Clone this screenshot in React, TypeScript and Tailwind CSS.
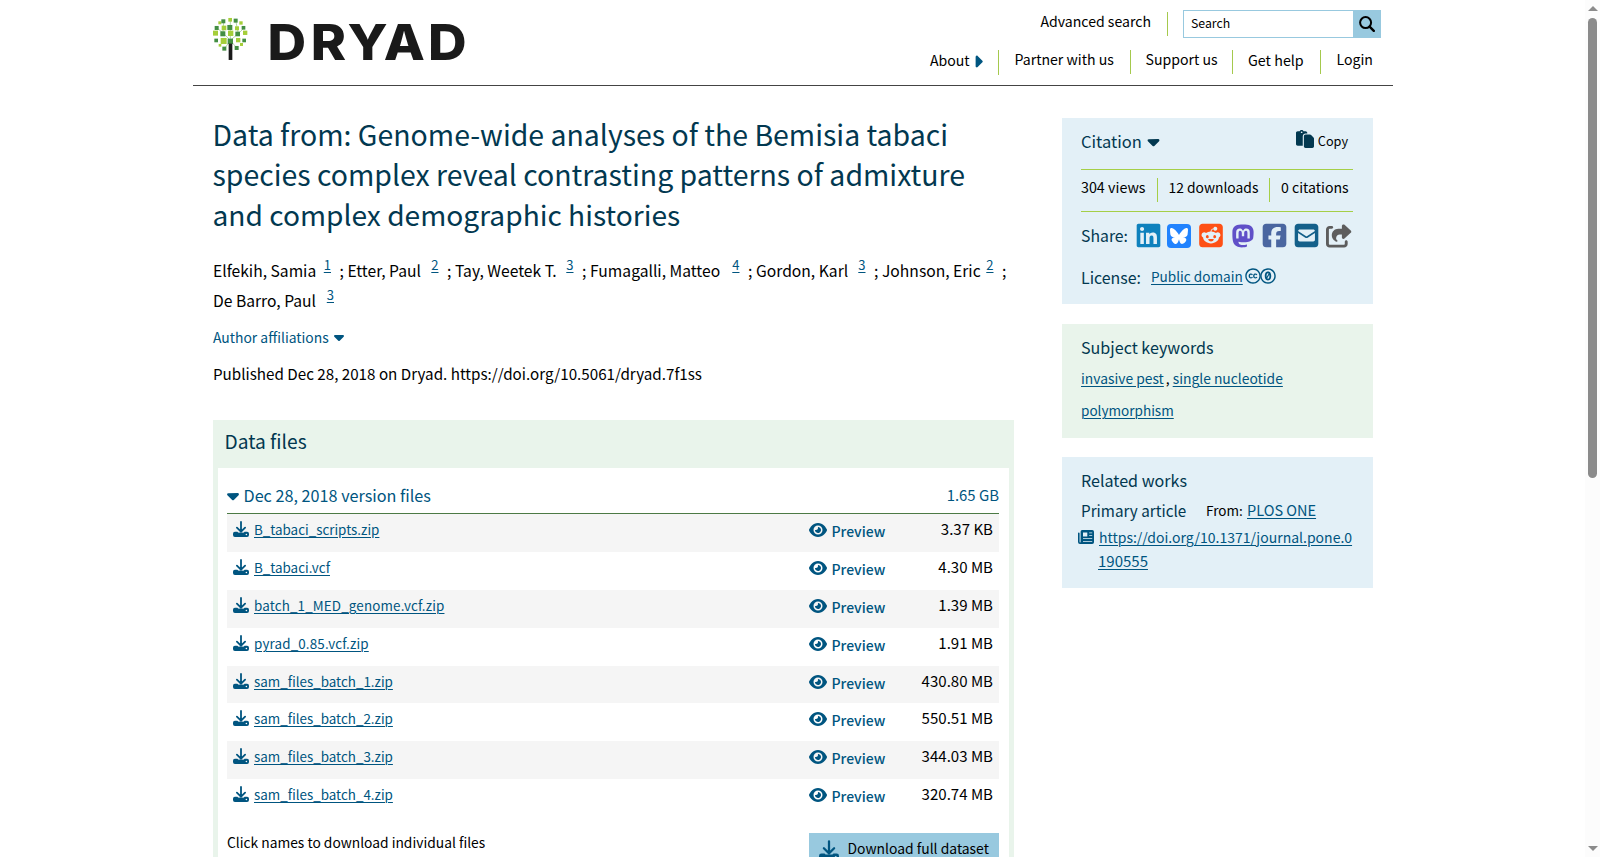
import {
  FaBluesky,
  FaCaretDown,
  FaCaretRight,
  FaCreativeCommons,
  FaCreativeCommonsZero,
  FaEye,
  FaLinkedin,
  FaMastodon,
  FaPaste,
  FaShareFromSquare,
  FaSquareEnvelope,
  FaSquareFacebook,
  FaSquareReddit,
} from "react-icons/fa6";

type Square = [x: number, y: number, size: number];

const LIGHT_LEAVES: Square[] = [
  [46, 5, 11], [16, 15, 9], [79, 15, 10], [26, 28, 14], [66, 30, 12], [0, 43, 15], [45, 43, 16],
  [90, 43, 13], [23, 65, 18], [69, 65, 13], [17, 83, 8], [81, 80, 9],
];

const DARK_LEAVES: Square[] = [
  [25, 9, 12], [62, 7, 12], [5, 29, 12], [43, 26, 15], [86, 29, 11], [22, 45, 15], [67, 46, 14],
  [4, 67, 11], [44, 67, 16], [88, 67, 11], [28, 91, 12], [65, 89, 12],
];

const AUTHORS = [
  { name: "Elfekih, Samia", affiliation: 1, width: "w-[134.5px]" },
  { name: "Etter, Paul", affiliation: 2, width: "w-[107.5px]" },
  { name: "Tay, Weetek T.", affiliation: 3, width: "w-[135px]" },
  { name: "Fumagalli, Matteo", affiliation: 4, width: "w-[166px]" },
  { name: "Gordon, Karl", affiliation: 3, width: "w-[126px]" },
  { name: "Johnson, Eric", affiliation: 2, width: "w-[128px]" },
  { name: "De Barro, Paul", affiliation: 3, width: "w-[137.5px]" },
];

const FILES = [
  { name: "B_tabaci_scripts.zip", size: "3.37 KB", row: "h-[38px]" },
  { name: "B_tabaci.vcf", size: "4.30 MB", row: "h-[38px]" },
  { name: "batch_1_MED_genome.vcf.zip", size: "1.39 MB", row: "h-[38px] tracking-[0.15px]" },
  { name: "pyrad_0.85.vcf.zip", size: "1.91 MB", row: "h-[38px] tracking-[0.15px]" },
  { name: "sam_files_batch_1.zip", size: "430.80 MB", row: "h-[37px]" },
  { name: "sam_files_batch_2.zip", size: "550.51 MB", row: "h-[38px]" },
  { name: "sam_files_batch_3.zip", size: "344.03 MB", row: "h-[38px]" },
  { name: "sam_files_batch_4.zip", size: "320.74 MB", row: "h-[38px]" },
];

const LINK = "text-[#005580] underline decoration-1 underline-offset-2";

function Logo() {
  return (
    <svg width="275" height="66" viewBox="0 0 275 66" className="overflow-visible" aria-label="Dryad">
      <g transform="translate(0 16.3) scale(0.3333)">
        <path
          d="M52 72 30 50 12 35M52 72 76 52 94 34M52 72V12M52 72 34 98M52 72 72 96M30 50 32 14M76 52 68 12"
          stroke="#8fbf7f"
          strokeWidth="2"
          fill="none"
        />
        {LIGHT_LEAVES.map(([x, y, s]) => (
          <rect key={`${x}-${y}`} x={x} y={y} width={s} height={s} fill="#a5ce39" />
        ))}
        {DARK_LEAVES.map(([x, y, s]) => (
          <rect key={`${x}-${y}`} x={x} y={y} width={s} height={s} fill="#438e42" />
        ))}
        <rect x="47" y="82" width="11" height="49" fill="#1a1a1a" />
      </g>
      <text
        transform="scale(1.08 1)"
        x="50.5 90.5 124.5 158 199"
        y="60"
        fill="#1a1a1a"
        fontFamily="Inter, sans-serif"
        fontWeight="800"
        fontSize="49.5"
      >
        DRYAD
      </text>
    </svg>
  );
}

function DownloadIcon({ className }: { className: string }) {
  return (
    <svg viewBox="0 0 16 16" className={className} fill="currentColor">
      <path d="M8 1V10.5M3.9 6.6 8 10.7l4.1-4.1" fill="none" stroke="currentColor" strokeWidth="1.8" strokeLinecap="round" />
      <path
        fillRule="evenodd"
        d="M1.9 10.8H4.4L6.8 13c.7.6 1.7.6 2.4 0l2.4-2.2h2.5A1.9 1.9 0 0 1 16 12.7v1.4A1.9 1.9 0 0 1 14.1 16H1.9A1.9 1.9 0 0 1 0 14.1v-1.4A1.9 1.9 0 0 1 1.9 10.8ZM13.4 12.7a.8.8 0 1 0 0 1.6.8.8 0 0 0 0-1.6Z"
      />
      <path d="M5.4 11.6h5.2v3H5.4z" />
    </svg>
  );
}

function ArticleIcon() {
  return (
    <svg viewBox="0 0 16 14" className="mt-[5px] mr-[5px] h-[14px] w-4 text-[#005580]" fill="currentColor">
      <path
        fillRule="evenodd"
        d="M4.5 0h9.7A1.8 1.8 0 0 1 16 1.8v10.4a1.8 1.8 0 0 1-1.8 1.8H2a2 2 0 0 1-2-2V3.2a.8.8 0 0 1 1.6 0V12a.5.5 0 0 0 1 0V1.8A1.8 1.8 0 0 1 4.5 0ZM5 2.4v4h4.3v-4ZM11.2 2.4v.9h3v-.9ZM11.2 5.2v.9h3v-.9ZM5 8.2v.9h9.2v-.9ZM5 10.9v.9h9.2v-.9Z"
      />
    </svg>
  );
}

function Header() {
  return (
    <header className="ml-[193px] flex h-[86px] w-[1200px] justify-between border-b border-[#444] pl-5">
      <Logo />
      <div className="flex flex-col items-end text-[14.1px] leading-6">
        <div className="flex pt-[10px] pr-3">
          <a className="-mt-px mr-4">Advanced search</a>
          <span className="mt-0.5 mr-[15px] h-6 w-px bg-[#a5c94d]" />
          <div className="flex h-7 w-[198px] border border-[#98c9df] text-[12.3px]">
            <span className="flex-1 pl-[7px]">Search</span>
            <span className="flex w-[27px] items-center justify-center bg-[#98c9df]">
              <svg width="16" height="16" viewBox="0 0 16 16" fill="none" stroke="black">
                <circle cx="6.6" cy="6.6" r="5.5" strokeWidth="2" />
                <path d="M10.6 10.6 14.8 14.8" strokeWidth="2.4" strokeLinecap="round" />
              </svg>
            </span>
          </div>
        </div>
        <nav className="flex pt-3 leading-[19px]">
          <a className="flex h-[25px] w-[69px] border-r border-[#a5c94d] pt-px">
            About
            <FaCaretRight className="mt-px ml-[2px] h-[19px] w-[12px] text-[#005580]" />
          </a>
          <a className="h-6 w-[132px] border-r border-[#a5c94d] pl-[15.5px]">Partner with us</a>
          <a className="h-6 w-[102px] border-r border-[#a5c94d] pl-[14.5px]">Support us</a>
          <a className="h-6 w-[88px] border-r border-[#a5c94d] pl-[15px] text-[14.3px]">Get help</a>
          <a className="h-6 w-[72px] pl-[15.5px]">Login</a>
        </nav>
      </div>
    </header>
  );
}

function FileList() {
  return (
    <section className="mt-[35px] h-[500px] bg-[#e9f4eb] px-[5px] pt-[6.5px]">
      <h2 className="mb-[13.5px] pl-[6.5px] text-[19.2px] leading-7 text-[#023850]">Data files</h2>
      <div className="h-full bg-white pt-[15px] pr-[10px] pl-[9px]">
        <div className="flex items-center justify-between border-b border-[#4c7a45] pb-[6px] leading-6 text-[#005580]">
          <span className="flex items-center text-[16.2px]">
            <FaCaretDown className="mr-[4px] -ml-[1.5px] h-[19px] w-[14px]" />
            Dec 28, 2018 version files
          </span>
          <span className="text-[14.9px]">1.65 GB</span>
        </div>
        <ul className="leading-6">
          {FILES.map((file) => (
            <li key={file.name} className={`flex pt-[3px] pr-[6px] pl-[6px] odd:bg-[#f5f5f5] ${file.row}`}>
              <DownloadIcon className="mt-1 mr-[5px] size-4 text-[#005580]" />
              <a className={`flex-1 text-[13.4px] ${LINK}`}>{file.name}</a>
              <span className="flex w-[96px] pt-0.5 text-[14px] font-medium tracking-normal text-[#005580]">
                <FaEye className="mt-[3px] mr-[4.5px] h-4 w-[18px]" />
                Preview
              </span>
              <span className="w-[88px] text-right text-[15.05px] tracking-normal">{file.size}</span>
            </li>
          ))}
        </ul>
        <div className="flex justify-between leading-6">
          <p className="pt-[13px] text-[13.8px]">Click names to download individual files</p>
          <button className="mt-4 flex h-[40px] w-[190px] bg-[#98c9df] pt-[3px] pl-[10px] text-[13.9px]">
            <DownloadIcon className="mt-1 mr-[8.5px] size-5 text-[#005580]" />
            Download full dataset
          </button>
        </div>
      </div>
    </section>
  );
}

function Article() {
  return (
    <main className="w-[801px]">
      <h1 className="-ml-[0.5px] pt-7 text-[28.45px] leading-10 whitespace-nowrap text-[#023850]">
        Data from: Genome-wide analyses of the Bemisia tabaci
        <br />
        species complex reveal contrasting patterns of admixture
        <br />
        <span className="text-[28.15px]">and complex demographic histories</span>
      </h1>
      <p className="mt-[21px] flex flex-wrap text-[15.65px] leading-[30px]">
        {AUTHORS.map((author, i) => (
          <span key={author.name} className={`flex ${author.width}`}>
            <span className="mt-px -mb-px whitespace-nowrap">{author.name}</span>
            <a className={`-mt-[5px] mr-[8.5px] ml-auto text-[13px] ${LINK}`}>{author.affiliation}</a>
            <span className="mt-px -mb-px w-2">{i < AUTHORS.length - 1 && ";"}</span>
          </span>
        ))}
      </p>
      <p className="mt-[10px] flex text-[13.9px] leading-6 text-[#005580]">
        Author affiliations
        <FaCaretDown className="mt-1 ml-[4px] h-4 w-[12px]" />
      </p>
      <p className="mt-3 text-[15.19px] leading-6">
        Published Dec 28, 2018 on Dryad. https://doi.org/10.5061/dryad.7f1ss
      </p>
      <FileList />
    </main>
  );
}

function CitationCard() {
  return (
    <section className="h-[186px] bg-[#e3f0f7] px-[19px] pt-[11px]">
      <div className="flex justify-between pb-[16px] text-[#023850]">
        <h2 className="flex text-[16.5px] leading-6">
          Citation
          <FaCaretDown className="mt-[3px] ml-[4px] h-[19px] w-[15px]" />
        </h2>
        <button className="flex pr-[6px] text-[12.7px] leading-6">
          <FaPaste className="mt-px mr-[4px] size-[18px]" />
          <span className="text-black">Copy</span>
        </button>
      </div>
      <div className="flex h-[43px] w-[272px] border-y border-[#a5cf47] py-2 text-[13.95px] leading-6">
        <span className="-mt-[3px] w-[76px] text-[14.3px]">304 views</span>
        <span className="h-6 w-px bg-[#a5cf47]" />
        <span className="-mt-[3px] w-[111px] pl-[10.5px] text-[13.85px]">12 downloads</span>
        <span className="h-6 w-px bg-[#a5cf47]" />
        <span className="-mt-[3px] pl-[11px] text-[14.1px]">0 citations</span>
      </div>
      <div className="flex pt-[12px] text-[15.8px] leading-6 text-[#023850]">
        <span className="w-[54px]">Share:</span>
        <div className="flex">
          <FaLinkedin className="-mt-0.5 mr-[5px] size-[27px] text-[#0e81bd]" />
          <span className="mr-[7px] flex size-6 items-center justify-center rounded-[4px] bg-[#2183fe] text-white">
            <FaBluesky size={18} />
          </span>
          <FaSquareReddit className="-mt-0.5 mr-[7px] h-[27px] w-[26px] text-[#fe5015]" />
          <FaMastodon className="-mt-px mr-[6px] h-[26px] w-[24px] text-[#6050c8]" />
          <FaSquareFacebook className="-mt-0.5 mr-[5px] size-[27px] text-[#4a66a0]" />
          <FaSquareEnvelope className="-mt-0.5 mr-[6px] size-[27px] text-[#14608a]" />
          <FaShareFromSquare className="h-6 w-[26px] text-[#5d5d5d]" />
        </div>
      </div>
      <div className="flex pt-[16px] leading-6">
        <span className="mt-px w-[70px] text-[15.92px] text-[#023850]">License:</span>
        <a className={`-mt-px text-[13.6px] ${LINK}`}>Public domain</a>
        <FaCreativeCommons className="mt-[3px] ml-[2px] size-4 text-[#005580]" />
        <FaCreativeCommonsZero className="mt-[3px] -ml-px size-4 text-[#005580]" />
      </div>
    </section>
  );
}

function Sidebar() {
  return (
    <aside className="mt-8 ml-12 w-[311px]">
      <CitationCard />
      <section className="mt-5 h-[114px] bg-[#e9f4eb] px-[19px] pt-[11px]">
        <h2 className="text-[16.1px] leading-6 text-[#023850]">Subject keywords</h2>
        <p className="mt-[3px] text-[13.85px] leading-8">
          <a className={LINK}>invasive pest</a>
          <span className="mr-[3px] ml-[2px]">,</span>
          <a className={LINK}>
            single nucleotide
            <br />
            <span className="text-[13.55px]">polymorphism</span>
          </a>
        </p>
      </section>
      <section className="mt-[19px] h-[131px] bg-[#e3f0f7] px-[19px] pt-[10.5px]">
        <h2 className="text-[16.1px] leading-6 text-[#023850]">Related works</h2>
        <div className="mt-[6px] flex leading-6">
          <h3 className="w-[125px] text-[15.25px] text-[#023850]">Primary article</h3>
          <span className="w-[41px] text-[13.5px]">From:</span>
          <a className={`text-[14.5px] ${LINK}`}>PLOS ONE</a>
        </div>
        <div className="-ml-[3px] flex pt-[3px] text-[14px] leading-6">
          <ArticleIcon />
          <a className={LINK}>
            https://doi.org/10.1371/journal.pone.0
            <br />
            <span className="-ml-px text-[15px]">190555</span>
          </a>
        </div>
      </section>
    </aside>
  );
}

function Scrollbar() {
  return (
    <div className="flex w-[15px] flex-col items-center bg-[#fcfcfc] py-[6px]">
      <svg width="10" height="5" viewBox="0 0 10 5" fill="#8b8b8b">
        <path d="M5 0 10 5H0z" />
      </svg>
      <div className="mt-[7px] h-[460px] w-[9px] rounded-full bg-[#8b8b8b]" />
      <svg className="mt-auto" width="10" height="5" viewBox="0 0 10 5" fill="#8b8b8b">
        <path d="M0 0H10L5 5z" />
      </svg>
    </div>
  );
}

export default function App() {
  return (
    <div className="flex h-[857px] w-[1600px] overflow-hidden bg-white font-['Noto_Sans_CJK_SC','Noto_Sans',sans-serif] text-black">
      <div className="w-[1585px]">
        <Header />
        <div className="ml-[213px] flex">
          <Article />
          <Sidebar />
        </div>
      </div>
      <Scrollbar />
    </div>
  );
}
